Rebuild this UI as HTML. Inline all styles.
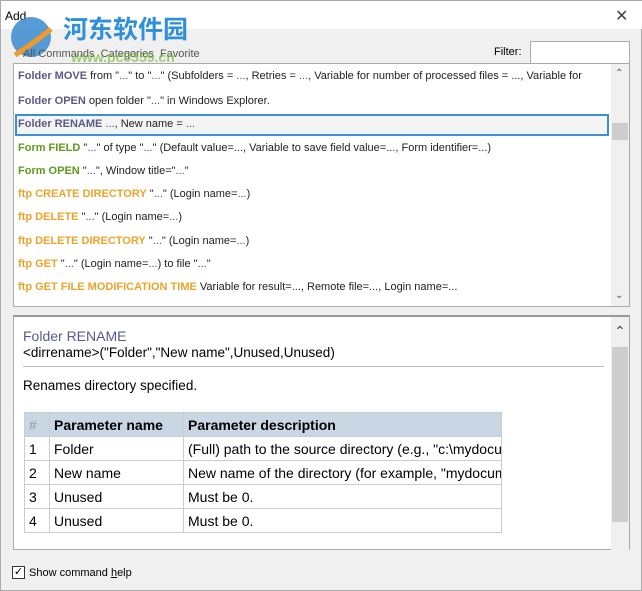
<!DOCTYPE html>
<html><head><meta charset="utf-8"><style>
*{margin:0;padding:0;box-sizing:border-box}
body{width:642px;height:591px;overflow:hidden;background:#f0f0f0;font-family:"Liberation Sans",sans-serif;position:relative;border:1px solid #aaa}
.abs{position:absolute}
.title{left:0;top:0;width:642px;height:28px;background:#fff}
.list{left:12px;top:62px;width:617px;height:244px;background:#fff;border:1px solid #aaa}
.row{position:absolute;left:4px;font-size:11px;color:#222;white-space:nowrap}
.f{color:#5a5a85;font-weight:bold}.g{color:#5e9a1e;font-weight:bold}.o{color:#eba42a;font-weight:bold}.d{color:#3a4aa0}
.sb{position:absolute;right:0;top:0;width:18px;height:242px;background:#f0f0f0}
.help{left:12px;top:314px;width:617px;height:235px;background:#fff;border:1px solid #aaa;border-top:2px solid #999}
table{border-collapse:collapse;position:absolute;left:10px;top:95px;font-size:14px}
td,th{border:1px solid #ccc;height:24px;padding:0 4px;text-align:left;white-space:nowrap;overflow:hidden}
th{background:#c9d6e4;font-weight:bold}
</style></head><body>
<div class="abs title"></div>
<div class="abs" style="left:4px;top:8px;font-size:12px">Add</div>
<div class="abs" style="left:614px;top:5px;font-size:16px;color:#444;font-weight:300">✕</div>
<svg class="abs" style="left:4px;top:14px" width="54" height="46"><circle cx="26" cy="22" r="20" fill="#3a8ad0" opacity=".85"/><path d="M10 40 Q26 30 46 14" stroke="#f29a2c" stroke-width="5" fill="none"/></svg>
<div class="abs" style="left:62px;top:12px;font-size:25px;font-weight:bold;color:#2f8fd8;font-family:'Noto Sans CJK SC',sans-serif;line-height:30px">河东软件园</div>
<div class="abs" style="left:22px;top:47px;font-size:11px;color:#555">All Commands&nbsp;&nbsp;Categories&nbsp;&nbsp;Favorite</div>
<div class="abs" style="left:70px;top:48px;font-size:14px;color:#6bb52b;opacity:.6;font-weight:bold">www.pc0359.cn</div>
<div class="abs" style="left:493px;top:45px;font-size:11px">Filter:</div>
<div class="abs" style="left:529px;top:40px;width:100px;height:23px;background:#fff;border:1px solid #aaa"></div>
<div class="abs list">
<div class="row" style="top:6px"><span class="f">Folder MOVE</span> from "<span class="d">...</span>" to "<span class="d">...</span>" (Subfolders = <span class="d">...</span>, Retries = <span class="d">...</span>, Variable for number of processed files = ..., Variable for</div>
<div class="row" style="top:31px"><span class="f">Folder OPEN</span> open folder "<span class="d">...</span>" in Windows Explorer.</div>
<div style="position:absolute;left:1px;top:50px;width:594px;height:22px;border:2px solid #3c8ed8;background:#f4f4f4"></div>
<div class="row" style="top:54px"><span class="f">Folder RENAME</span> <span class="d">...</span>, New name = <span class="d">...</span></div>
<div class="row" style="top:78px"><span class="g">Form FIELD</span> "<span class="d">...</span>" of type "<span class="d">...</span>" (Default value=..., Variable to save field value=..., Form identifier=...)</div>
<div class="row" style="top:101px"><span class="g">Form OPEN</span> "<span class="d">...</span>", Window title="<span class="d">...</span>"</div>
<div class="row" style="top:124px"><span class="o">ftp CREATE DIRECTORY</span> "<span class="d">...</span>" (Login name=<span class="d">...</span>)</div>
<div class="row" style="top:147px"><span class="o">ftp DELETE</span> "<span class="d">...</span>" (Login name=<span class="d">...</span>)</div>
<div class="row" style="top:171px"><span class="o">ftp DELETE DIRECTORY</span> "<span class="d">...</span>" (Login name=<span class="d">...</span>)</div>
<div class="row" style="top:194px"><span class="o">ftp GET</span> "<span class="d">...</span>" (Login name=<span class="d">...</span>) to file "<span class="d">...</span>"</div>
<div class="row" style="top:217px"><span class="o">ftp GET FILE MODIFICATION TIME</span> Variable for result=..., Remote file=..., Login name=...</div>
<div class="sb"><div style="position:absolute;left:4px;top:4px;font-size:10px;color:#555">⌃</div><div style="position:absolute;left:1px;top:59px;width:16px;height:17px;background:#cdcdcd"></div><div style="position:absolute;left:4px;top:226px;font-size:10px;color:#555">⌄</div></div>
</div>
<div class="abs help">
<div class="abs" style="left:9px;top:11px;font-size:14px;color:#5a5a8a">Folder RENAME</div>
<div class="abs" style="left:9px;top:28px;font-size:13.5px">&lt;dirrename&gt;("Folder","New name",Unused,Unused)</div>
<div class="abs" style="left:9px;top:49px;width:581px;border-top:1px solid #bbb"></div>
<div class="abs" style="left:9px;top:61px;font-size:13.5px">Renames directory specified.</div>
<table>
<tr><th style="width:25px;color:#999;font-weight:normal">#</th><th style="width:134px">Parameter name</th><th style="width:318px;max-width:318px">Parameter description</th></tr>
<tr><td>1</td><td>Folder</td><td style="max-width:318px">(Full) path to the source directory (e.g., "c:\mydocu</td></tr>
<tr><td>2</td><td>New name</td><td style="max-width:318px">New name of the directory (for example, "mydocume</td></tr>
<tr><td>3</td><td>Unused</td><td>Must be 0.</td></tr>
<tr><td>4</td><td>Unused</td><td>Must be 0.</td></tr>
</table>
<div class="abs" style="right:0;top:0;width:18px;height:233px;background:#f0f0f0"><div style="position:absolute;left:3px;top:6px;font-size:14px;color:#444">⌃</div><div style="position:absolute;left:1px;top:30px;width:16px;height:175px;background:#cdcdcd"></div></div>
</div>
<div class="abs" style="left:11px;top:565px;width:13px;height:13px;border:1px solid #333;background:#fff;font-size:11px;line-height:11px;text-align:center">✓</div>
<div class="abs" style="left:28px;top:566px;font-size:11px">Show command <u>h</u>elp</div>
</body></html>
